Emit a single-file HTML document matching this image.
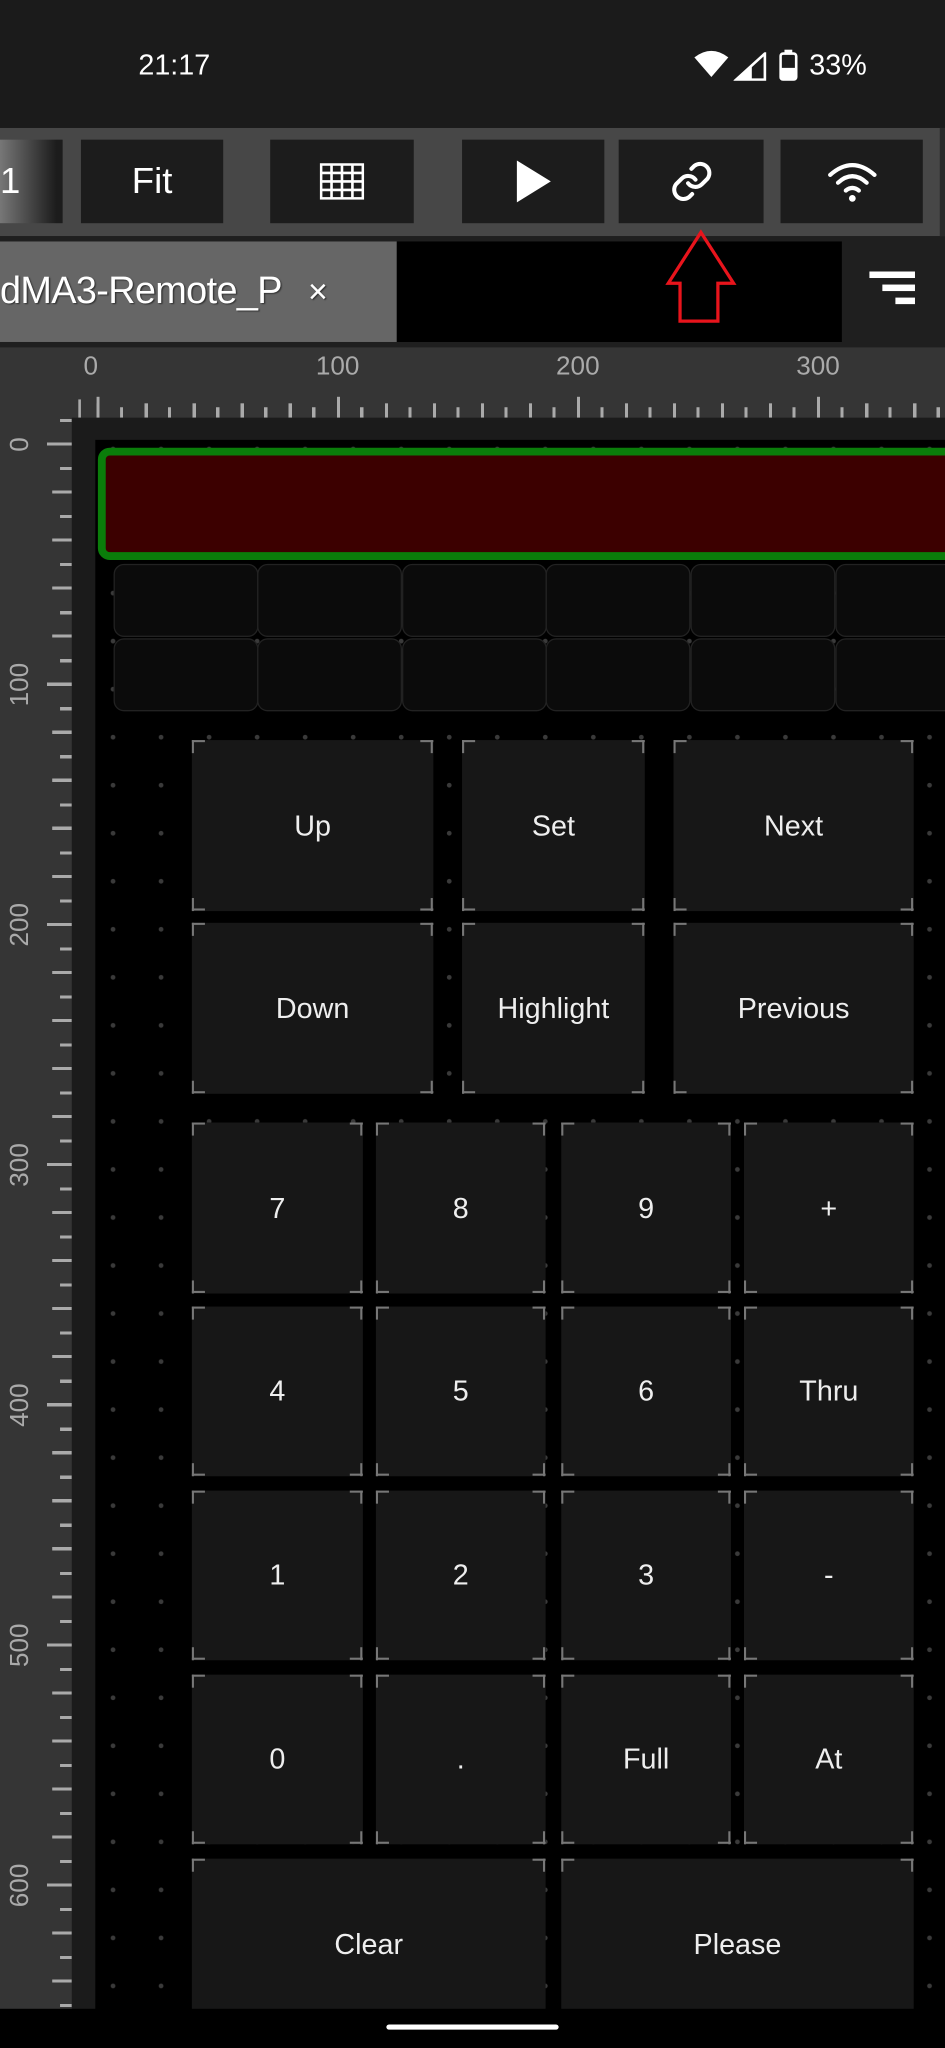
<!DOCTYPE html>
<html><head><meta charset="utf-8"><style>
*{margin:0;padding:0;box-sizing:border-box}
html,body{width:945px;height:2048px;overflow:hidden;background:#000}
#w{position:absolute;left:0;top:0;width:724px;height:1569px;transform:scale(1.30525);transform-origin:0 0;font-family:"Liberation Sans",sans-serif;background:#000;overflow:hidden}
.a{position:absolute}
.tb{position:absolute;top:107px;height:64px;background:#1c1c1c;color:#fff;display:flex;align-items:center;justify-content:center}
.btn{position:absolute;background-color:#171717;color:#eee;font-size:22px;display:flex;align-items:center;justify-content:center;
background-image:
linear-gradient(#777,#777),linear-gradient(#777,#777),linear-gradient(#777,#777),linear-gradient(#777,#777),
linear-gradient(#777,#777),linear-gradient(#777,#777),linear-gradient(#777,#777),linear-gradient(#777,#777);
background-repeat:no-repeat;
background-size:10px 1.6px,1.6px 10px,10px 1.6px,1.6px 10px,10px 1.6px,1.6px 10px,10px 1.6px,1.6px 10px;
background-position:0 0,0 0,100% 0,100% 0,0 100%,0 100%,100% 100%,100% 100%}
.cell{position:absolute;background:#0b0b0b;border:1px solid #222;border-radius:8px;width:111px;height:56px}
</style></head><body><div id="w">
<!-- status bar -->
<div class="a" style="left:0;top:0;width:724px;height:98px;background:#1b1b1b"></div>
<div class="a" style="left:106px;top:37px;color:#fff;font-size:22px">21:17</div>
<svg class="a" style="left:530px;top:38px" width="30" height="24" viewBox="0 0 30 24"><path d="M2 6 Q15 -4 28 6 L15 21 Z" fill="#fff"/></svg>
<svg class="a" style="left:562px;top:40px" width="26" height="22" viewBox="0 0 26 22"><path d="M24 1 L24 21 L2 21 Z" fill="none" stroke="#fff" stroke-width="2"/><path d="M14 11 L14 21 L2 21 Z" fill="#fff"/></svg>
<svg class="a" style="left:597px;top:38px" width="14" height="24" viewBox="0 0 14 24"><rect x="4" y="0" width="6" height="3" fill="#fff"/><rect x="1" y="3" width="12" height="20" rx="2" fill="none" stroke="#fff" stroke-width="2"/><rect x="1" y="14" width="12" height="9" fill="#fff"/></svg>
<div class="a" style="left:620px;top:37px;color:#fff;font-size:22px">33%</div>
<!-- toolbar -->
<div class="a" style="left:0;top:98px;width:724px;height:83px;background:#474747"></div>
<div class="a" style="left:720px;top:98px;width:4px;height:86px;background:#2a2a2a"></div>
<div class="tb" style="left:0;width:48px;background:linear-gradient(90deg,#777,#1c1c1c 90%);justify-content:flex-start;font-size:28px">1</div>
<div class="tb" style="left:62px;width:109px;font-size:28px">Fit</div>
<div class="tb" style="left:207px;width:110px"><svg width="34" height="28" viewBox="0 0 34 28"><g fill="none" stroke="#fff" stroke-width="2"><rect x="1" y="1" width="32" height="26"/><path d="M9 1V27M17 1V27M25 1V27M1 7.5H33M1 14H33M1 20.5H33"/></g></svg></div>
<div class="tb" style="left:354px;width:109px"><svg width="30" height="34" viewBox="0 0 30 34"><path d="M2 1 L28 17 L2 33 Z" fill="#fff"/></svg></div>
<div class="tb" style="left:474px;width:111px"><svg width="34" height="34" viewBox="0 0 24 24"><g fill="none" stroke="#fff" stroke-width="2.2" stroke-linecap="round"><path d="M10 13a5 5 0 0 0 7.5.5l3-3a5 5 0 0 0-7-7l-1.7 1.7"/><path d="M14 11a5 5 0 0 0-7.5-.5l-3 3a5 5 0 0 0 7 7l1.7-1.7"/></g></svg></div>
<div class="tb" style="left:598px;width:109px"><svg width="40" height="34" viewBox="0 0 40 34"><g fill="none" stroke="#fff" stroke-width="3.2" stroke-linecap="round"><path d="M3 12 Q20 -3 37 12"/><path d="M9 18 Q20 8 31 18"/><path d="M15 24 Q20 20 25 24"/></g><circle cx="20" cy="30" r="2.6" fill="#fff"/></svg></div>
<!-- tab row -->
<div class="a" style="left:0;top:181px;width:724px;height:85px;background:#1f1f1f"></div>
<div class="a" style="left:0;top:185px;width:304px;height:77px;background:#666;color:#fff;font-size:29px;line-height:77px;white-space:nowrap;overflow:hidden;text-shadow:1px 1px 1px #333;letter-spacing:-0.5px">dMA3-Remote_P<span style="margin-left:20px;font-size:26px">×</span></div>
<div class="a" style="left:304px;top:185px;width:341px;height:77px;background:#000"></div>
<svg class="a" style="left:666px;top:208px" width="36" height="30" viewBox="0 0 36 30"><rect x="0" y="0" width="35" height="5" fill="#fff"/><rect x="10" y="10" width="25" height="5" fill="#fff"/><rect x="20" y="20" width="15" height="5" fill="#fff"/></svg>
<svg class="a" style="left:508px;top:174px" width="60" height="76" viewBox="0 0 60 76"><path d="M29 4 L54 43 L42 43 L42 72 L13 72 L13 43 L4 43 Z" fill="none" stroke="#e8141c" stroke-width="2.5"/></svg>
<!-- rulers -->
<div class="a" style="left:0;top:266px;width:724px;height:1274px;background:#353535"></div>
<div class="a" style="left:64px;top:270px;color:#aaa;font-size:20px">0</div>
<div class="a" style="left:242px;top:270px;color:#aaa;font-size:20px">100</div>
<div class="a" style="left:426px;top:270px;color:#aaa;font-size:20px">200</div>
<div class="a" style="left:610px;top:270px;color:#aaa;font-size:20px">300</div>
<div class="a" style="left:74px;top:309px;width:650px;height:11px;background:repeating-linear-gradient(90deg,#aaa 0 2.4px,transparent 2.4px 36.8px)"></div>
<div class="a" style="left:92.4px;top:312px;width:632px;height:8px;background:repeating-linear-gradient(90deg,#aaa 0 2.4px,transparent 2.4px 36.8px)"></div>
<div class="a" style="left:74px;top:304px;width:650px;height:16px;background:repeating-linear-gradient(90deg,#aaa 0 2.4px,transparent 2.4px 184px)"></div>
<div class="a" style="left:60px;top:306px;width:2px;height:14px;background:#aaa"></div>
<div class="a" style="left:40px;top:339px;width:15px;height:1200px;background:repeating-linear-gradient(180deg,#aaa 0 2.4px,transparent 2.4px 36.8px)"></div>
<div class="a" style="left:46px;top:320.6px;width:9px;height:1220px;background:repeating-linear-gradient(180deg,#aaa 0 2.4px,transparent 2.4px 36.8px)"></div>
<div class="a" style="left:36px;top:339px;width:19px;height:1200px;background:repeating-linear-gradient(180deg,#aaa 0 2.4px,transparent 2.4px 184px)"></div>
<div style="position:absolute;left:0;top:0;color:#aaa;font-size:20px">
<div class="a" style="left:-4px;top:329px;width:40px;text-align:center;transform:rotate(-90deg)">0</div>
<div class="a" style="left:-4px;top:513px;width:40px;text-align:center;transform:rotate(-90deg)">100</div>
<div class="a" style="left:-4px;top:697px;width:40px;text-align:center;transform:rotate(-90deg)">200</div>
<div class="a" style="left:-4px;top:881px;width:40px;text-align:center;transform:rotate(-90deg)">300</div>
<div class="a" style="left:-4px;top:1065px;width:40px;text-align:center;transform:rotate(-90deg)">400</div>
<div class="a" style="left:-4px;top:1249px;width:40px;text-align:center;transform:rotate(-90deg)">500</div>
<div class="a" style="left:-4px;top:1433px;width:40px;text-align:center;transform:rotate(-90deg)">600</div>
</div>
<!-- canvas -->
<div class="a" style="left:55px;top:320px;width:669px;height:1220px;background:#1b1b1b"></div>
<div class="a" style="left:73px;top:337px;width:651px;height:1203px;background-color:#000;background-image:radial-gradient(circle,#3a3a3a 1.6px,transparent 2px);background-size:36.8px 36.8px;background-position:-4.8px -11.4px"></div>
<div class="a" style="left:75px;top:343px;width:660px;height:86px;background:#3c0000;border:6px solid #0a7d0a;border-radius:9px"></div>
<div class="cell" style="left:87px;top:432px"></div><div class="cell" style="left:197px;top:432px"></div><div class="cell" style="left:308px;top:432px"></div><div class="cell" style="left:418px;top:432px"></div><div class="cell" style="left:529px;top:432px"></div><div class="cell" style="left:640px;top:432px"></div>
<div class="cell" style="left:87px;top:489px"></div><div class="cell" style="left:197px;top:489px"></div><div class="cell" style="left:308px;top:489px"></div><div class="cell" style="left:418px;top:489px"></div><div class="cell" style="left:529px;top:489px"></div><div class="cell" style="left:640px;top:489px"></div>
<div class="btn" style="left:147px;top:567px;width:185px;height:131px">Up</div>
<div class="btn" style="left:354px;top:567px;width:140px;height:131px">Set</div>
<div class="btn" style="left:516px;top:567px;width:184px;height:131px">Next</div>
<div class="btn" style="left:147px;top:707px;width:185px;height:131px">Down</div>
<div class="btn" style="left:354px;top:707px;width:140px;height:131px">Highlight</div>
<div class="btn" style="left:516px;top:707px;width:184px;height:131px">Previous</div>
<div class="btn" style="left:147px;top:860px;width:131px;height:131px">7</div>
<div class="btn" style="left:288px;top:860px;width:130px;height:131px">8</div>
<div class="btn" style="left:430px;top:860px;width:130px;height:131px">9</div>
<div class="btn" style="left:570px;top:860px;width:130px;height:131px">+</div>
<div class="btn" style="left:147px;top:1001px;width:131px;height:130px">4</div>
<div class="btn" style="left:288px;top:1001px;width:130px;height:130px">5</div>
<div class="btn" style="left:430px;top:1001px;width:130px;height:130px">6</div>
<div class="btn" style="left:570px;top:1001px;width:130px;height:130px">Thru</div>
<div class="btn" style="left:147px;top:1142px;width:131px;height:130px">1</div>
<div class="btn" style="left:288px;top:1142px;width:130px;height:130px">2</div>
<div class="btn" style="left:430px;top:1142px;width:130px;height:130px">3</div>
<div class="btn" style="left:570px;top:1142px;width:130px;height:130px">-</div>
<div class="btn" style="left:147px;top:1283px;width:131px;height:130px">0</div>
<div class="btn" style="left:288px;top:1283px;width:130px;height:130px">.</div>
<div class="btn" style="left:430px;top:1283px;width:130px;height:130px">Full</div>
<div class="btn" style="left:570px;top:1283px;width:130px;height:130px">At</div>
<div class="btn" style="left:147px;top:1424px;width:271px;height:131px">Clear</div>
<div class="btn" style="left:430px;top:1424px;width:270px;height:131px">Please</div>
<!-- nav bar -->
<div class="a" style="left:0;top:1539px;width:724px;height:30px;background:#000"></div>
<div class="a" style="left:296px;top:1551px;width:132px;height:4px;border-radius:2px;background:#fff"></div>
</div></body></html>
